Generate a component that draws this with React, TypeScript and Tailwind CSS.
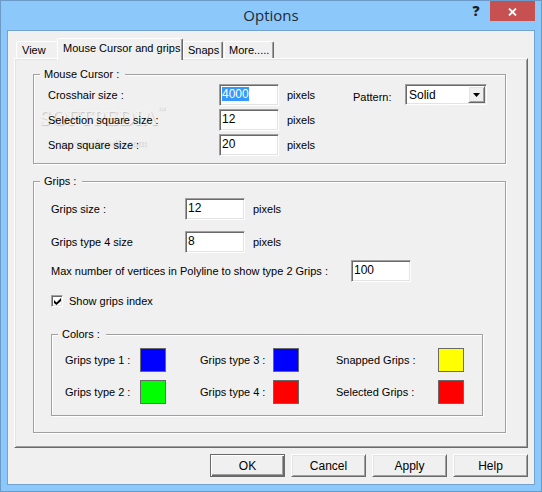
import { useEffect, useRef } from 'react'
import type { ReactNode, Ref } from 'react'

const tabs = ['View', 'Mouse Cursor and grips', 'Snaps', 'More.....'] as const
const activeTab = 'Mouse Cursor and grips'

const cursorSizes = [
  { id: 'crosshair', label: 'Crosshair size :', value: '4000' },
  { id: 'selection', label: 'Selection square size :', value: '12' },
  { id: 'snap', label: 'Snap square size :', value: '20' }
]

const swatches = [
  { label: 'Grips type 1 :', color: 'bg-[#0000ff]', width: 'w-[75px]' },
  { label: 'Grips type 3 :', color: 'bg-[#0000ff]', width: 'w-[73px]' },
  { label: 'Snapped Grips :', color: 'bg-[#ffff00]', width: 'w-[102px]' },
  { label: 'Grips type 2 :', color: 'bg-[#00ff00]', width: 'w-[75px]' },
  { label: 'Grips type 4 :', color: 'bg-[#ff0000]', width: 'w-[73px]' },
  { label: 'Selected Grips :', color: 'bg-[#ff0000]', width: 'w-[102px]' }
]

const sunken =
  'border border-t-[#a0a0a0] border-l-[#a0a0a0] border-r-white border-b-white bg-white shadow-[inset_1px_1px_0_#696969,inset_-1px_-1px_0_#e3e3e3] outline-none'

const raised =
  'border border-t-white border-l-white border-r-[#696969] border-b-[#696969] bg-[#f0f0f0] shadow-[inset_1px_1px_0_#e3e3e3,inset_-1px_-1px_0_#a0a0a0]'

function Group({ title, className, children }: { title: string; className?: string; children: ReactNode }) {
  return (
    <fieldset
      className={`min-w-0 border border-[#a0a0a0] shadow-[1px_1px_0_#fff,inset_1px_1px_0_#fff] ${className ?? ''}`}
    >
      <legend className="ml-1.5 bg-[#f0f0f0] pl-1 pr-1.5">{title}</legend>
      {children}
    </fieldset>
  )
}

function SizeInput({ id, value, ref }: { id: string; value: string; ref?: Ref<HTMLInputElement> }) {
  return (
    <input
      ref={ref}
      id={id}
      type="text"
      defaultValue={value}
      className={`h-[22px] w-[60px] shrink-0 pb-[3px] pl-0.5 text-[12px] selection:bg-[#3399ff] selection:text-white ${sunken}`}
    />
  )
}

function TitleBar() {
  return (
    <header className="grid h-[29px] grid-cols-[1fr_auto_1fr] text-[#1e2a35]">
      <h1 className="col-start-2 pt-[3px] font-['Open_Sans','Noto_Sans',sans-serif] text-[15px] leading-[22px]">
        Options
      </h1>
      <div className="flex items-start justify-end">
        <button
          aria-label="Help"
          className="h-5 w-7 font-['Open_Sans',sans-serif] text-[14px] font-extrabold leading-5 text-[#1e1e1e]"
        >
          ?
        </button>
        <button aria-label="Close" className="flex h-5 w-[45px] items-center justify-center bg-[#c75050]">
          <svg width="9" height="8" viewBox="0 0 9 8" className="mt-px">
            <path d="M1 0.5 L8 7.5 M8 0.5 L1 7.5" stroke="#fff" strokeWidth="1.8" />
          </svg>
        </button>
      </div>
    </header>
  )
}

function Tabs() {
  return (
    <div role="tablist" className="flex h-5 items-end pl-0.5">
      {tabs.map((tab) => (
        <button
          key={tab}
          role="tab"
          aria-selected={tab === activeTab}
          className={`whitespace-nowrap rounded-t-[2px] border-l border-t border-white bg-[#f0f0f0] text-left ${
            tab === activeTab
              ? 'relative -mb-0.5 h-[22px] w-[126px] border-r border-r-[#696969] pb-1 pl-[5px] shadow-[inset_-1px_0_0_#a0a0a0]'
              : tab === 'View'
                ? 'h-[17px] w-[41px] pl-[5px]'
                : tab === 'Snaps'
                  ? 'h-[17px] w-10 border-r border-r-[#696969] pl-1 shadow-[inset_-1px_0_0_#a0a0a0]'
                  : 'ml-px h-[17px] w-[50px] border-r border-r-[#696969] pl-1 shadow-[inset_-1px_0_0_#a0a0a0]'
          }`}
        >
          {tab}
        </button>
      ))}
    </div>
  )
}

function Watermark() {
  return (
    <div
      aria-hidden="true"
      className="pointer-events-none absolute left-[38px] top-[105px] flex flex-col items-center font-['Liberation_Serif',serif] text-[#f4f4f4] [text-shadow:1px_1px_1px_#00000033]"
    >
      <div className="flex items-start text-[22px] leading-6">
        SOFTPEDIA<span className="text-[8px] leading-[8px]">™</span>
      </div>
      <div className="text-[11px] leading-6">www.softpedia.com</div>
    </div>
  )
}

export default function App() {
  const crosshair = useRef<HTMLInputElement>(null)

  useEffect(() => {
    crosshair.current?.focus()
    crosshair.current?.select()
  }, [])

  return (
    <div className="relative border border-[#6b9ac8] bg-[#8dc8fb] px-1.5 pb-1.5 font-['Liberation_Sans',Arial,sans-serif] text-[11px] leading-4 text-black">
      <TitleBar />
      <main className="border border-[#73a3d0] bg-[#f0f0f0] px-1.5 pb-[7px] pt-[7px]">
        <Tabs />
        <div
          role="tabpanel"
          className="border border-t-white border-l-white border-r-[#696969] border-b-[#696969] pb-3.5 pl-[18px] pr-[21px] pt-[7px] shadow-[inset_1px_1px_0_#e3e3e3,inset_-1px_-1px_0_#a0a0a0]"
        >
          <Group title="Mouse Cursor :">
            <Watermark />
            <div className="relative flex items-start justify-between pb-[7px] pl-3.5 pr-[18px] pt-0.5">
              <div className="flex flex-col gap-[3px]">
                {cursorSizes.map((size, index) => (
                  <div key={size.id} className="flex items-center">
                    <label htmlFor={size.id} className="w-[171px]">
                      {size.label}
                    </label>
                    <SizeInput id={size.id} value={size.value} ref={index === 0 ? crosshair : undefined} />
                    <span className="pl-2">pixels</span>
                  </div>
                ))}
              </div>
              <div className="flex items-center">
                <label htmlFor="pattern" className="w-[52px] pt-1">
                  Pattern:
                </label>
                <div className="relative">
                  <select
                    id="pattern"
                    className={`h-[21px] w-[82px] appearance-none rounded-none pl-[3px] text-[12px] ${sunken}`}
                  >
                    <option>Solid</option>
                  </select>
                  <span
                    className={`pointer-events-none absolute inset-y-0.5 right-0.5 flex w-[17px] items-center justify-center ${raised}`}
                  >
                    <svg width="7" height="4" viewBox="0 0 7 4">
                      <path d="M0 0 H7 L3.5 4 Z" />
                    </svg>
                  </span>
                </div>
              </div>
            </div>
          </Group>

          <Group title="Grips :" className="mt-[9px]">
            <div className="pb-4 pl-[17px] pr-[22px] pt-[9px]">
              <div className="flex items-center">
                <label htmlFor="grips" className="w-[134px]">
                  Grips size :
                </label>
                <SizeInput id="grips" value="12" />
                <span className="pl-2">pixels</span>
              </div>
              <div className="mt-[11px] flex items-center">
                <label htmlFor="grips4" className="w-[134px]">
                  Grips type 4 size
                </label>
                <SizeInput id="grips4" value="8" />
                <span className="pl-2">pixels</span>
              </div>
              <div className="mt-[7px] flex items-center">
                <label htmlFor="vertices" className="w-[300px]">
                  Max number of vertices in Polyline to show type 2 Grips :
                </label>
                <SizeInput id="vertices" value="100" />
              </div>
              <label className="mt-[11px] flex items-center gap-1.5">
                <span className="relative flex">
                  <input type="checkbox" defaultChecked className={`peer size-3 appearance-none ${sunken}`} />
                  <svg
                    width="7"
                    height="7"
                    viewBox="0 0 7 7"
                    className="pointer-events-none absolute left-[3px] top-[3px] hidden peer-checked:block"
                  >
                    <path d="M0 2 L2.5 4.5 L7 0 V3 L2.5 7 L0 5 Z" />
                  </svg>
                </span>
                Show grips index
              </label>

              <Group title="Colors :" className="mt-[17px]">
                <div className="grid grid-cols-[135px_136px_128px] gap-y-2 pb-[11px] pl-[13px] pt-1.5">
                  {swatches.map((swatch) => (
                    <label key={swatch.label} className="flex items-center">
                      <span className={swatch.width}>{swatch.label}</span>
                      <button className={`h-6 w-[26px] border border-[#696969] ${swatch.color}`} />
                    </label>
                  ))}
                </div>
              </Group>
            </div>
          </Group>
        </div>

        <div className="mt-1.5 flex justify-end gap-1.5 text-[12px]">
          <button className="h-[23px] w-[75px] border border-[#696969] bg-[#f0f0f0] shadow-[inset_1px_1px_0_#fff,inset_-1px_-1px_0_#696969,inset_-2px_-2px_0_#a0a0a0]">
            OK
          </button>
          <button className={`h-[23px] w-[75px] ${raised}`}>Cancel</button>
          <button className={`h-[23px] w-[75px] ${raised}`}>Apply</button>
          <button className={`h-[23px] w-[75px] ${raised}`}>Help</button>
        </div>
      </main>
    </div>
  )
}
